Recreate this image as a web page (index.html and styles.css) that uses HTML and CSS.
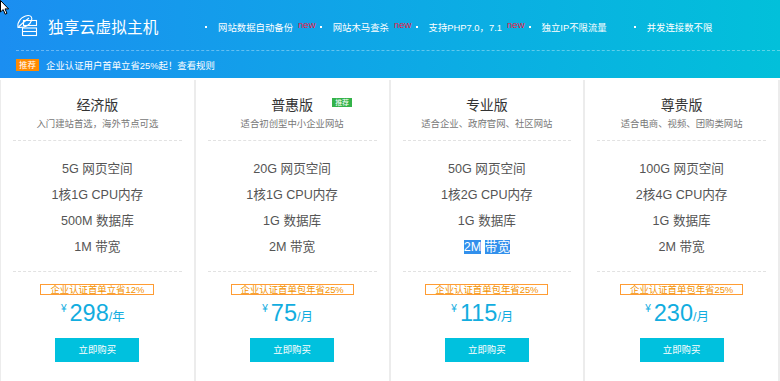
FILE: index.html
```html
<!DOCTYPE html>
<html lang="zh-CN">
<head>
<meta charset="utf-8">
<title>独享云虚拟主机</title>
<link rel="stylesheet" href="styles.css">
</head>
<body>
<header class="hero">
  <div class="hero-top">
    <svg class="logo" width="22" height="23" viewBox="0 0 22 23" fill="none" stroke="#fff" stroke-width="1.1">
      <path d="M2 13.5 C1 8 5 2.5 12 1.5 C15 1.3 16.5 3.5 15.5 6.5 C14 11 9 13.8 2 13.5 Z"/>
      <path d="M2.5 13 C6 9.5 9 7 13 4"/>
      <rect x="7.5" y="6.5" width="13" height="5"/>
      <rect x="6.5" y="14" width="14" height="7.5"/>
      <line x1="6.5" y1="17.5" x2="20.5" y2="17.5"/>
    </svg>
    <h1 class="title">独享云虚拟主机</h1>
    <ul class="feats">
      <li class="feat">网站数据自动备份<sup class="new">new</sup></li>
      <li class="feat">网站木马查杀<sup class="new">new</sup></li>
      <li class="feat">支持PHP7.0，7.1<sup class="new">new</sup></li>
      <li class="feat feat-wide">独立IP不限流量</li>
      <li class="feat">并发连接数不限</li>
    </ul>
  </div>
  <div class="hero-bottom">
    <span class="badge-orange">推荐</span>
    <span class="notice">企业认证用户首单立省25%起！查看规则</span>
  </div>
</header>

<main class="plans">
  <section class="plan">
    <div class="plan-head">
      <h2 class="plan-name">经济版</h2>
      <p class="plan-desc">入门建站首选，海外节点可选</p>
    </div>
    <ul class="specs">
      <li>5G 网页空间</li>
      <li>1核1G CPU内存</li>
      <li>500M 数据库</li>
      <li>1M 带宽</li>
    </ul>
    <div class="plan-foot">
      <div class="promo">企业认证首单立省12%</div>
      <div class="price"><span class="cur">¥</span><span class="num">298</span><span class="unit">/年</span></div>
      <a class="buy">立即购买</a>
    </div>
  </section>

  <section class="plan">
    <div class="plan-head">
      <h2 class="plan-name">普惠版<span class="badge-green">推荐</span></h2>
      <p class="plan-desc">适合初创型中小企业网站</p>
    </div>
    <ul class="specs">
      <li>20G 网页空间</li>
      <li>1核1G CPU内存</li>
      <li>1G 数据库</li>
      <li>2M 带宽</li>
    </ul>
    <div class="plan-foot">
      <div class="promo">企业认证首单包年省25%</div>
      <div class="price"><span class="cur">¥</span><span class="num">75</span><span class="unit">/月</span></div>
      <a class="buy">立即购买</a>
    </div>
  </section>

  <section class="plan">
    <div class="plan-head">
      <h2 class="plan-name">专业版</h2>
      <p class="plan-desc">适合企业、政府官网、社区网站</p>
    </div>
    <ul class="specs">
      <li>50G 网页空间</li>
      <li>1核2G CPU内存</li>
      <li>1G 数据库</li>
      <li><span class="sel">2M</span> <span class="sel">带宽</span></li>
    </ul>
    <div class="plan-foot">
      <div class="promo">企业认证首单包年省25%</div>
      <div class="price"><span class="cur">¥</span><span class="num">115</span><span class="unit">/月</span></div>
      <a class="buy">立即购买</a>
    </div>
  </section>

  <section class="plan">
    <div class="plan-head">
      <h2 class="plan-name">尊贵版</h2>
      <p class="plan-desc">适合电商、视频、团购类网站</p>
    </div>
    <ul class="specs">
      <li>100G 网页空间</li>
      <li>2核4G CPU内存</li>
      <li>1G 数据库</li>
      <li>2M 带宽</li>
    </ul>
    <div class="plan-foot">
      <div class="promo">企业认证首单包年省25%</div>
      <div class="price"><span class="cur">¥</span><span class="num">230</span><span class="unit">/月</span></div>
      <a class="buy">立即购买</a>
    </div>
  </section>
</main>

<svg class="cursor" width="10" height="16" viewBox="0 0 10 16">
  <path d="M0.5 0.5 L0.5 12 L3.2 9.6 L5.2 14.2 L7 13.4 L5 8.9 L8.6 8.9 Z" fill="#fff" stroke="#000" stroke-width="1"/>
</svg>
</body>
</html>
```

FILE: styles.css
```css
* { box-sizing: border-box; margin: 0; padding: 0; }

html, body {
  width: 780px;
  height: 381px;
  overflow: hidden;
  background: #fff;
}

body {
  font-family: "Liberation Sans", "Noto Sans CJK SC", sans-serif;
  color: #333;
  position: relative;
}

/* ---------- header ---------- */
.hero {
  height: 78px;
  padding-left: 16px;
  background: linear-gradient(90deg, #1b8ef1 0%, #0ea8e6 50%, #02c0da 100%);
  color: #fff;
}

.hero-top {
  height: 51px;
  display: flex;
  align-items: center;
  border-bottom: 1px dashed rgba(255, 255, 255, 0.35);
  padding-top: 2px;
}

.logo { flex: none; margin-right: 10px; margin-top: -1px; }

.title {
  font-size: 15.6px;
  font-weight: normal;
  letter-spacing: 0.2px;
  width: 157px;
}

.feats {
  list-style: none;
  display: flex;
  align-items: center;
  font-size: 9.4px;
  padding-top: 2px;
}

.feat {
  position: relative;
  padding-left: 13px;
  margin-right: 4px;
  white-space: nowrap;
}

.feat::before {
  content: "";
  position: absolute;
  left: 0;
  top: 50%;
  width: 2px;
  height: 2px;
  margin-top: -1px;
  background: #fff;
}

.feat-wide { margin-right: 27px; }

.new {
  color: #e8173d;
  font-size: 9.6px;
  margin-left: 5px;
  vertical-align: 3px;
  line-height: 0;
}

.hero-bottom {
  height: 27px;
  display: flex;
  align-items: center;
}

.badge-orange {
  display: inline-block;
  width: 23px;
  height: 12px;
  line-height: 12px;
  text-align: center;
  background: #ff8a00;
  font-size: 8.5px;
  margin-right: 7px;
}

.notice { font-size: 9.4px; }

/* ---------- plans ---------- */
.plans {
  display: grid;
  grid-template-columns: repeat(4, 1fr);
  border-left: 1px solid #ececec;
  height: 303px;
  margin-top: 2px;
}

.plan {
  border-right: 2px solid #ececec;
  text-align: center;
  padding: 0 12px;
}

.plan-head {
  height: 61px;
  padding-top: 15px;
  border-bottom: 1px dashed #e2e2e2;
}

.plan-name {
  font-size: 14px;
  font-weight: normal;
  color: #333;
  line-height: 20px;
  position: relative;
}

.badge-green {
  position: absolute;
  margin-left: 19px;
  top: 3px;
  width: 20px;
  height: 9px;
  line-height: 9px;
  background: #34b34a;
  color: #fff;
  font-size: 7px;
}

.plan-desc {
  font-size: 9.4px;
  color: #777;
  line-height: 14px;
  margin-top: 2px;
}

.specs {
  list-style: none;
  padding: 16px 0 10px;
  border-bottom: 1px dashed #e2e2e2;
  font-size: 12.6px;
  color: #555;
}

.specs li { line-height: 25.9px; }

.sel {
  background: #3290ec;
  color: #fff;
}

.plan-foot {
  display: flex;
  flex-direction: column;
  align-items: center;
  padding-top: 12px;
}

.promo {
  height: 11px;
  line-height: 9px;
  border: 1px solid #ff9c33;
  color: #f39200;
  font-size: 9.4px;
  padding: 0 9px;
}

.price {
  color: #12addf;
  line-height: 28px;
  margin-top: 0;
  padding-right: 9px;
  white-space: nowrap;
}

.cur {
  font-size: 10px;
  vertical-align: 9px;
  margin-right: 3px;
}

.num { font-size: 23.5px; }

.unit { font-size: 12.5px; }

.buy {
  display: block;
  width: 84px;
  height: 24px;
  line-height: 24px;
  margin-top: 7px;
  background: #00c1de;
  color: #fff;
  font-size: 9.4px;
}

.cursor {
  position: absolute;
  left: 0;
  top: 0;
}
```
